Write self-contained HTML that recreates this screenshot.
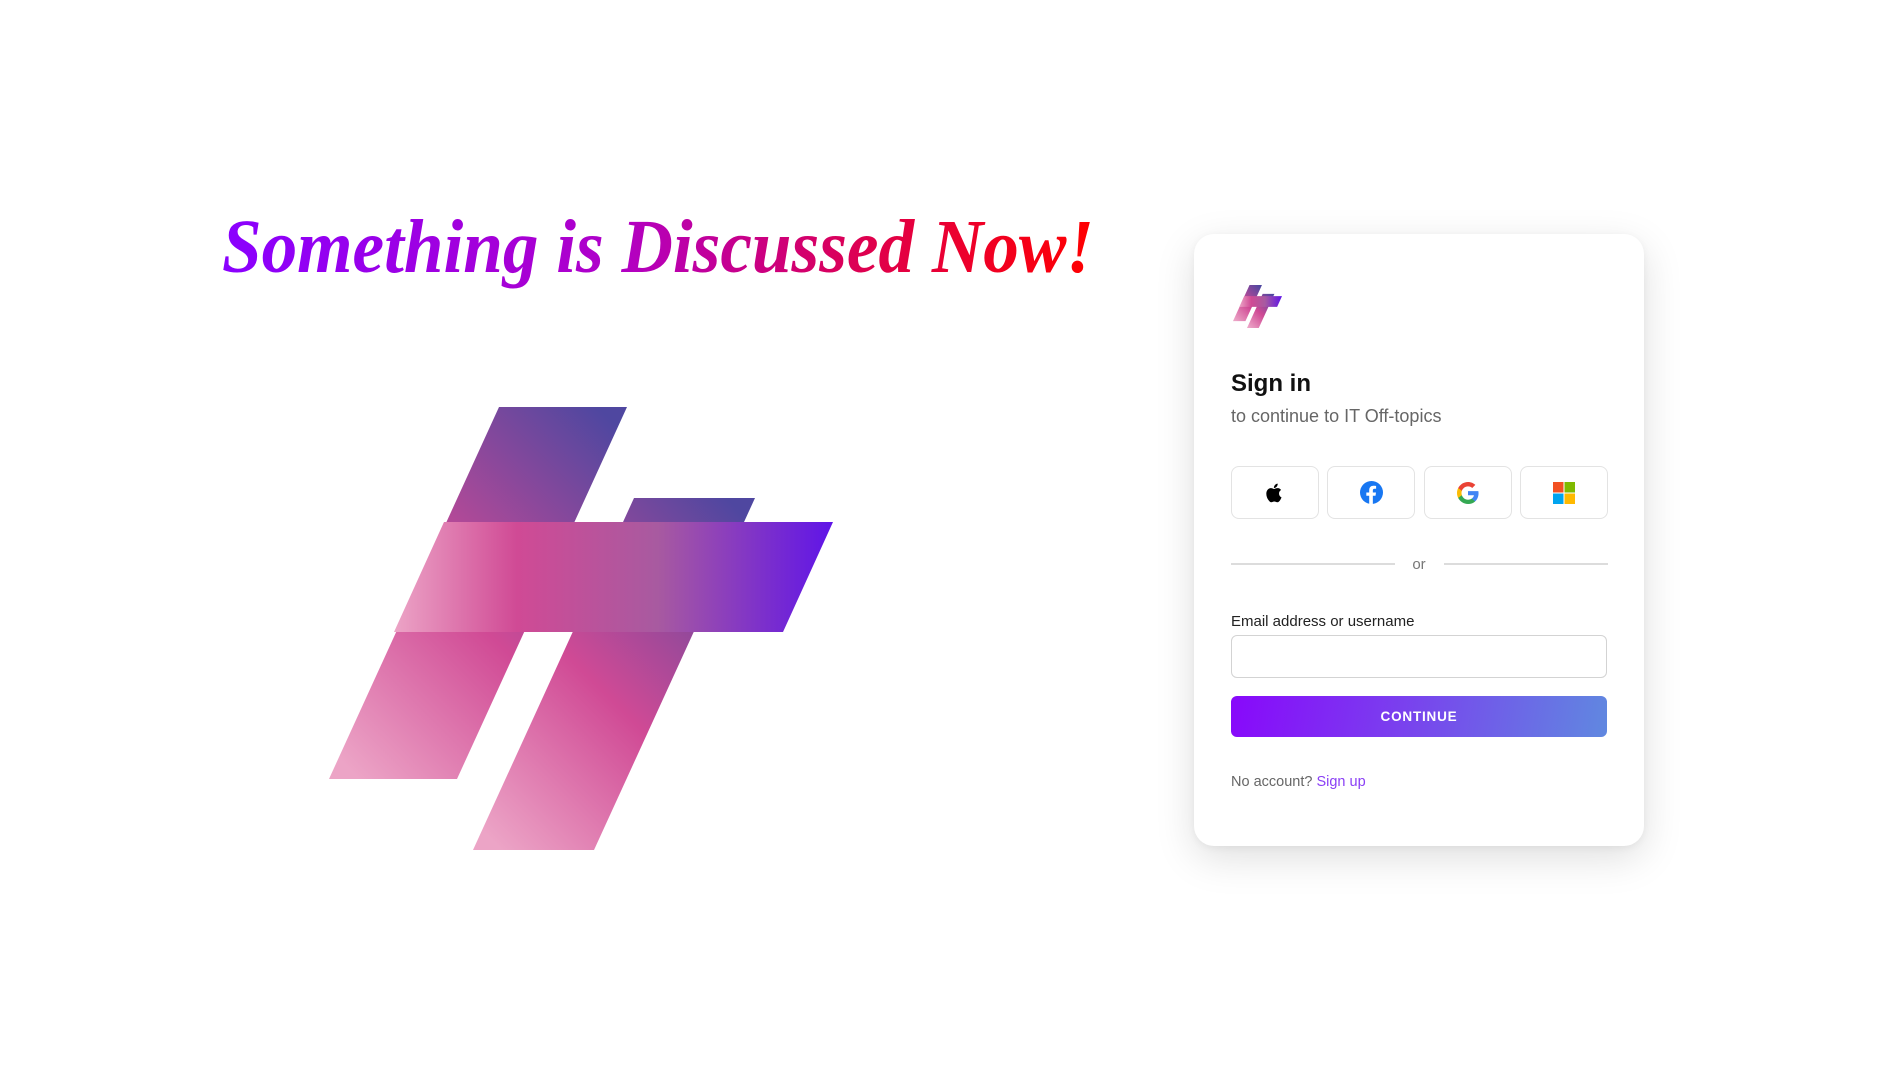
<!DOCTYPE html>
<html><head><meta charset="utf-8"><style>
*{margin:0;padding:0;box-sizing:border-box}
body{width:1899px;height:1066px;background:#fff;position:relative;overflow:hidden;font-family:"Liberation Sans",sans-serif}
svg.bg{position:absolute;left:0;top:0}
.card{position:absolute;left:1194px;top:234px;width:450px;height:612px;background:#fff;border-radius:20px;box-shadow:0 12px 40px rgba(0,0,0,0.13),0 2px 8px rgba(0,0,0,0.05)}
.abs{position:absolute}
.h{left:37px;top:136px;font-size:24px;font-weight:bold;color:#111}
.sub{left:37px;top:172px;font-size:18px;color:#666}
.btn{top:232px;width:88px;height:53px;border:1px solid #e3e3e3;border-radius:8px;display:flex;align-items:center;justify-content:center}
.line{top:329px;height:2px;background:#dcdcdc;width:164px}
.or{left:217px;top:322px;font-size:15px;color:#777;width:16px;text-align:center}
.lbl{left:37px;top:379px;font-size:15px;color:#222}
.inp{left:37px;top:401px;width:376px;height:43px;border:1px solid #d3d3d3;border-radius:6px}
.cont{left:37px;top:462px;width:376px;height:41px;border-radius:6px;background:linear-gradient(100deg,#8808fb 0%,#7a40ee 45%,#6088e0 100%);color:#fff;font-weight:bold;font-size:13.5px;letter-spacing:0.8px;display:flex;align-items:center;justify-content:center}
.na{left:37px;top:540px;font-size:14.5px;color:#666}
.na span{color:#8a3ff5}
</style></head><body>
<svg class="bg" width="1899" height="1066" viewBox="0 0 1899 1066">
<defs>
<linearGradient id="tg" x1="0" x2="1" y1="0" y2="0"><stop offset="0" stop-color="#8a00ff"/><stop offset="0.45" stop-color="#b000c8"/><stop offset="0.75" stop-color="#e0004a"/><stop offset="1" stop-color="#ff0000"/></linearGradient>
<linearGradient id="sg" x1="0.9" y1="0" x2="0.1" y2="1"><stop offset="0" stop-color="#4f47a0"/><stop offset="0.55" stop-color="#d04a95"/><stop offset="1" stop-color="#eca4c6"/></linearGradient>
<linearGradient id="cg" x1="0" y1="0.5" x2="1" y2="0.5"><stop offset="0" stop-color="#eca4c6"/><stop offset="0.28" stop-color="#d04a95"/><stop offset="0.6" stop-color="#a85aa0"/><stop offset="1" stop-color="#5f14e8"/></linearGradient>
<g id="logo">
<polygon points="170,0 298,0 128,372 0,372" fill="url(#sg)"/>
<polygon points="305,91 426,91 265,443 144,443" fill="url(#sg)"/>
<polygon points="115,115 504,115 454,225 65,225" fill="url(#cg)"/>
</g>
</defs>
<text x="222" y="272" font-family="Liberation Serif,serif" font-style="italic" font-weight="bold" font-size="76" fill="url(#tg)" textLength="872" lengthAdjust="spacingAndGlyphs">Something is Discussed Now!</text>
<use href="#logo" transform="translate(329,407)"/>
</svg>
<div class="card">
<svg class="abs" style="left:39px;top:51px" width="49" height="43" viewBox="0 0 504 443" preserveAspectRatio="none"><use href="#logo"/></svg>
<div class="abs h">Sign in</div>
<div class="abs sub">to continue to IT Off-topics</div>
<div class="abs btn" style="left:37px"><svg width="22" height="24" viewBox="0 0 24 24"><path fill="#000" d="M16.4 12.6c0-2.6 2.1-3.8 2.2-3.9-1.2-1.8-3.1-2-3.700-2-1.6-.2-3.1.9-3.9.9-.8 0-2-.9-3.4-.9-1.7 0-3.3 1-4.200 2.600-1.800 3.100-.5 7.700 1.300 10.200.9 1.200 1.900 2.600 3.200 2.600 1.300-.1 1.800-.8 3.300-.8 1.500 0 2 .8 3.400.8 1.400 0 2.300-1.300 3.100-2.500 1-1.400 1.400-2.800 1.400-2.900-.1 0-2.700-1-2.700-4.100zM13.9 5c.7-.9 1.200-2 1-3.200-1 0-2.300.7-3 1.600-.7.8-1.200 2-1.100 3.100 1.200.1 2.300-.6 3.100-1.500z"/></svg></div>
<div class="abs btn" style="left:133px"><svg width="23" height="23" viewBox="0 0 24 24"><circle cx="12" cy="12" r="12" fill="#1877f2"/><path fill="#fff" d="M13.4 24v-8.6h2.8l.5-3.4h-3.3V9.9c0-.9.4-1.8 1.9-1.8h1.5V5.2s-1.4-.2-2.7-.2c-2.7 0-4.5 1.7-4.5 4.6V12H6.6v3.4h3v8.6z"/></svg></div>
<div class="abs btn" style="left:230px"><svg width="22" height="22" viewBox="0 0 24 24"><path fill="#4285f4" d="M23.5 12.3c0-.8-.1-1.6-.2-2.3H12v4.4h6.5c-.3 1.5-1.1 2.7-2.4 3.6v3h3.9c2.2-2.1 3.5-5.1 3.5-8.7z"/><path fill="#34a853" d="M12 24c3.2 0 6-1.1 7.9-2.9l-3.9-3c-1.1.7-2.4 1.2-4 1.2-3.1 0-5.7-2.1-6.7-4.9h-4v3.1C3.3 21.3 7.3 24 12 24z"/><path fill="#fbbc05" d="M5.3 14.3c-.2-.7-.4-1.5-.4-2.3s.1-1.6.4-2.3V6.6h-4C.5 8.2 0 10 0 12s.5 3.8 1.3 5.4z"/><path fill="#ea4335" d="M12 4.8c1.8 0 3.3.6 4.6 1.8l3.4-3.4C18 1.2 15.2 0 12 0 7.3 0 3.3 2.7 1.3 6.6l4 3.1c1-2.8 3.6-4.9 6.7-4.9z"/></svg></div>
<div class="abs btn" style="left:326px"><svg width="22" height="22" viewBox="0 0 22 22"><rect width="10.5" height="10.5" fill="#f25022"/><rect x="11.5" width="10.5" height="10.5" fill="#7fba00"/><rect y="11.5" width="10.5" height="10.5" fill="#00a4ef"/><rect x="11.5" y="11.5" width="10.5" height="10.5" fill="#ffb900"/></svg></div>
<div class="abs line" style="left:37px"></div>
<div class="abs or">or</div>
<div class="abs line" style="left:250px"></div>
<div class="abs lbl">Email address or username</div>
<div class="abs inp"></div>
<div class="abs cont">CONTINUE</div>
<div class="abs na">No account? <span>Sign up</span></div>
</div>
</body></html>
